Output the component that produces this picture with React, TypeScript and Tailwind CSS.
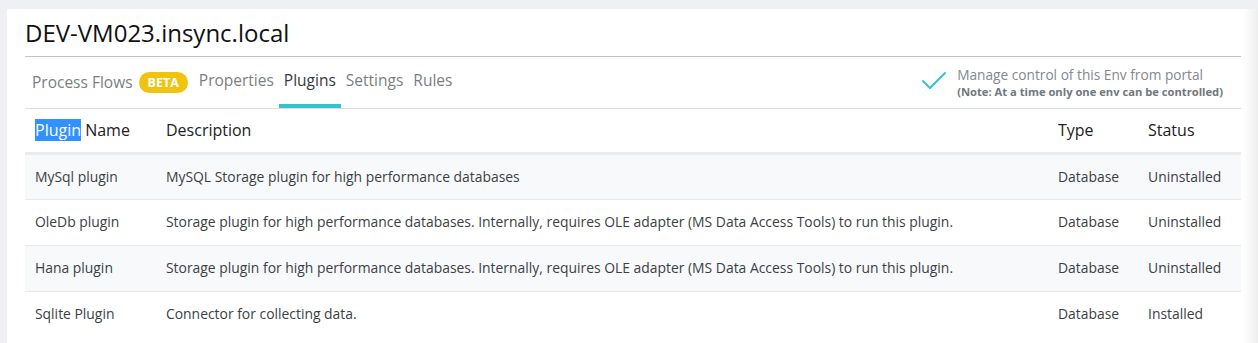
import React from 'react';

const plugins = [
  { name: 'MySql plugin', desc: 'MySQL Storage plugin for high performance databases', type: 'Database', status: 'Uninstalled' },
  { name: 'OleDb plugin', desc: 'Storage plugin for high performance databases. Internally, requires OLE adapter (MS Data Access Tools) to run this plugin.', type: 'Database', status: 'Uninstalled' },
  { name: 'Hana plugin', desc: 'Storage plugin for high performance databases. Internally, requires OLE adapter (MS Data Access Tools) to run this plugin.', type: 'Database', status: 'Uninstalled' },
  { name: 'Sqlite Plugin', desc: 'Connector for collecting data.', type: 'Database', status: 'Installed' },
];

const tabs = ['Properties', 'Plugins', 'Settings', 'Rules'];

export default function App() {
  return (
    <div
      className="h-[343px] w-[1258px] overflow-hidden bg-[#eef0f3] pt-[9px] pl-[7px] text-[#333]"
      style={{ fontFamily: '"Open Sans", "Noto Sans", sans-serif' }}
    >
      <div className="flex h-full">
        <div className="flex-1 bg-white pl-[18px] pr-[2px]">
          {/* Header */}
          <h1 className="h-[47px] pt-[8px] text-[24px] leading-[32px] text-[#111]">DEV-VM023.insync.local</h1>
          <div className="border-t border-[#c4c4c4]" />

          {/* Tabs */}
          <div className="flex h-[52px] items-stretch justify-between border-b border-[#e3d9de]">
            <div className="flex items-stretch text-[15.5px] text-[#7a7f83]">
              <div className="flex items-center gap-[6px] pl-[7px] pr-[6px]">
                <span>Process Flows</span>
                <span className="rounded-full bg-[#f0c30f] px-[9px] py-[1px] text-[12.5px] font-bold leading-[19px] text-white">BETA</span>
              </div>
              {tabs.map(t => (
                <div
                  key={t}
                  className={`flex items-center px-[5px] border-b-[4px] ${
                    t === 'Plugins' ? 'border-[#35c2cf] text-[#333a40]' : 'border-transparent'
                  }`}
                >
                  {t}
                </div>
              ))}
            </div>
            <div className="flex items-center gap-[10px] pr-[18px]">
              <svg width="26" height="20" viewBox="0 0 26 20" fill="none" className="mt-[-4px]">
                <path d="M2 10 L9 17 L24 2" stroke="#35c2cf" strokeWidth="2" strokeLinecap="round" strokeLinejoin="round" />
              </svg>
              <div className="flex flex-col">
                <span className="text-[13.7px] leading-[18px] text-[#808a8f]">Manage control of this Env from portal</span>
                <span className="text-[11.2px] font-bold leading-[16px] text-[#707880]">(Note: At a time only one env can be controlled)</span>
              </div>
            </div>
          </div>

          {/* Table */}
          <table className="w-full border-collapse text-left">
            <thead>
              <tr className="h-[44px] border-b-[3px] border-[#e8ecf0] text-[16px] text-[#222]">
                <th className="w-[141px] pl-[10px] font-normal">
                  <span className="bg-[#3390ff] text-white">Plugin</span> Name
                </th>
                <th className="font-normal">Description</th>
                <th className="w-[90px] font-normal">Type</th>
                <th className="w-[93px] font-normal">Status</th>
              </tr>
            </thead>
            <tbody className="text-[13.9px] text-[#3a3f44]">
              {plugins.map((p, i) => (
                <tr
                  key={p.name}
                  className={`h-[46px] ${i < plugins.length - 1 ? 'border-b border-[#e6e9ec]' : ''} ${
                    i % 2 === 0 ? 'bg-[#f8f9fb]' : 'bg-white'
                  }`}
                >
                  <td className="pl-[10px] pt-[1px]">{p.name}</td>
                  <td className="pt-[1px]">{p.desc}</td>
                  <td className="pt-[1px]">{p.type}</td>
                  <td className="pt-[1px]">{p.status}</td>
                </tr>
              ))}
            </tbody>
          </table>
        </div>
        <div className="w-[15px] bg-gradient-to-r from-white to-[#eeeeee]" />
      </div>
    </div>
  );
}
